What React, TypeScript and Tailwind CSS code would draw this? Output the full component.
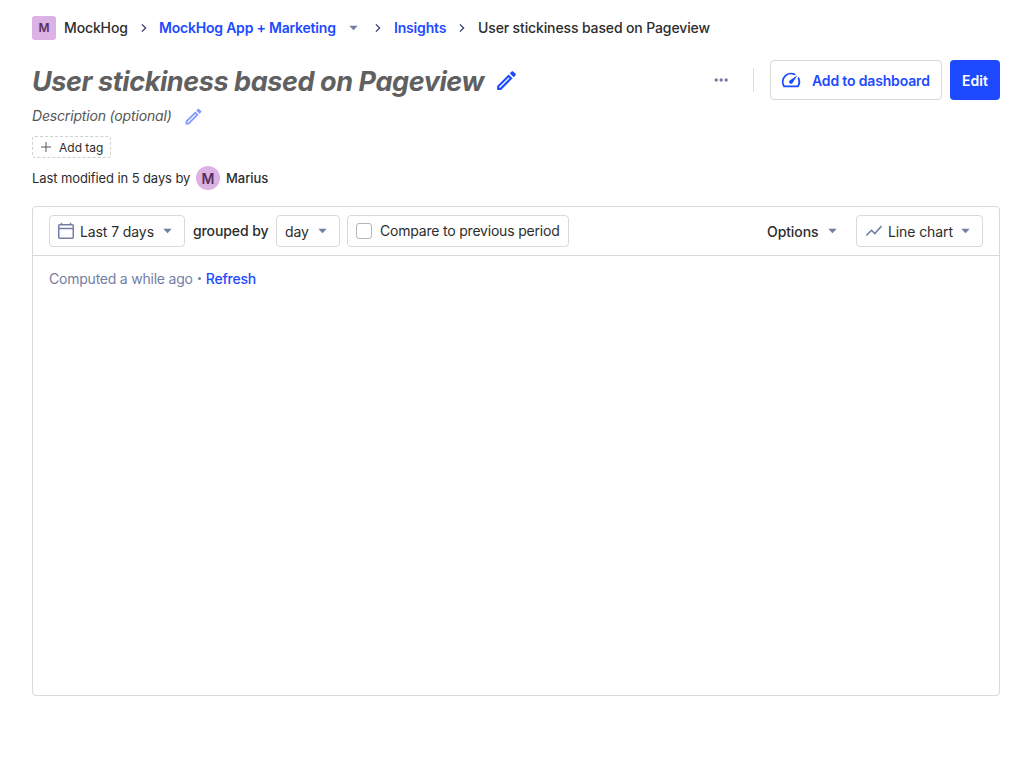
import React from 'react'

function Caret({ className = '' }: { className?: string }) {
    return (
        <svg className={`h-2 w-[9px] shrink-0 fill-[#747ea2] ${className}`} viewBox="0 0 9 8">
            <path d="M.3 1.8h8.4L4.5 6.2z" />
        </svg>
    )
}

function Chevron({ className = '' }: { className?: string }) {
    return (
        <svg className={`h-2 w-[6px] shrink-0 ${className}`} viewBox="0 0 6 8" fill="none" stroke="#35416b" strokeWidth="1.3">
            <path d="M.9.4 4.6 4 .9 7.6" />
        </svg>
    )
}

function Pencil({ className = '' }: { className?: string }) {
    return (
        <svg className={`shrink-0 ${className}`} viewBox="0 0 24 24" fill="currentColor">
            <path d="M14.06 9 15 9.94 5.92 19H5v-.92L14.06 9m3.6-6c-.25 0-.51.1-.7.29l-1.83 1.83 3.75 3.75 1.83-1.83c.39-.39.39-1.04 0-1.41l-2.34-2.34c-.2-.2-.45-.29-.71-.29m-3.6 3.19L3 17.25V21h3.75L17.81 9.94l-3.75-3.75z" />
        </svg>
    )
}

function Breadcrumbs() {
    return (
        <nav className="flex h-6 items-center text-[14px] leading-5 font-medium tracking-[-0.13px] whitespace-nowrap">
            <span className="mr-2 flex h-6 w-6 items-center justify-center rounded-[3px] bg-[#dcb1e3] text-[12px] font-semibold text-[#572e5e]">M</span>
            <span className="w-[64px]">MockHog</span>
            <Chevron className="mr-[12px] ml-[13px]" />
            <a className="w-[177px] font-semibold tracking-[-0.21px] text-[#1d4aff]">MockHog App + Marketing</a>
            <Caret className="ml-[13px]" />
            <Chevron className="mr-[13px] ml-[17px]" />
            <a className="w-[53px] font-semibold tracking-[-0.18px] text-[#1d4aff]">Insights</a>
            <Chevron className="mr-[13px] ml-[12px]" />
            <span>User stickiness based on Pageview</span>
        </nav>
    )
}

function Header() {
    return (
        <header className="mt-5 flex h-10 items-center">
            <h1 className="w-[451px] pt-[3px] text-[27px] leading-10 font-bold tracking-[-0.42px] whitespace-nowrap text-[#606060] italic">User stickiness based on Pageview</h1>
            <Pencil className="ml-[11px] h-[25px] w-[25px] text-[#1d4aff]" />
            <div className="ml-auto flex items-center">
                <svg className="h-4 w-4 fill-[#747ea2]" viewBox="0 0 16 16">
                    <circle cx="3.2" cy="8" r="1.7" />
                    <circle cx="8.2" cy="8" r="1.7" />
                    <circle cx="13.2" cy="8" r="1.7" />
                </svg>
                <div className="mr-4 ml-6 h-6 w-px bg-[#dedede]" />
                <button className="flex h-10 w-[172px] items-center rounded border border-[#d9d9d9] pl-[9px] text-[14px] font-semibold tracking-[-0.16px] whitespace-nowrap text-[#1d4aff]">
                    <svg className="mr-[10px] h-[22px] w-[22px] shrink-0" viewBox="0 0 24 24" fill="currentColor">
                        <path d="m20.38 8.57-1.23 1.85a8 8 0 0 1-.22 7.58H5.07A8 8 0 0 1 15.58 6.85l1.85-1.23A10 10 0 0 0 3.35 19a2 2 0 0 0 1.72 1h13.85a2 2 0 0 0 1.74-1 10 10 0 0 0-.27-10.44zm-9.79 6.84a2 2 0 0 0 2.83 0l5.66-8.49-8.49 5.66a2 2 0 0 0 0 2.83z" />
                    </svg>
                    Add to dashboard
                </button>
                <button className="ml-2 h-10 w-[50px] rounded bg-[#1d4aff] text-[14px] font-semibold text-white">Edit</button>
            </div>
        </header>
    )
}

function Toolbar() {
    return (
        <div className="flex h-[49px] items-center border-b border-[#d9d9d9] px-4 text-[14px] tracking-[-0.1px] whitespace-nowrap">
            <button className="flex h-8 w-[136px] items-center rounded border border-[#d9d9d9] pl-2">
                <svg className="mr-[6px] h-[18px] w-4 shrink-0" viewBox="0 0 16 18" fill="none" stroke="#747ea2" strokeWidth="1.5">
                    <rect x=".75" y="2.75" width="14.5" height="13.5" rx="1" />
                    <path d="M1 6.5h14M3.5.8v2M12.5.8v2" />
                </svg>
                <span className="w-[75px] text-left">Last 7 days</span>
                <Caret className="ml-[8px]" />
            </button>
            <span className="ml-2 w-[75px] pb-[2px] font-medium">grouped by</span>
            <button className="ml-2 flex h-8 w-[64px] items-center rounded border border-[#d9d9d9] pl-2">
                <span className="w-[24px] text-left">day</span>
                <Caret className="ml-[9px]" />
            </button>
            <label className="ml-[7px] flex h-8 w-[222px] items-center rounded border border-[#d9d9d9] pl-2 tracking-[-0.2px]">
                <span className="mr-2 h-4 w-4 rounded-[3px] border-[1.5px] border-[#b5b5b5]" />
                <span className="pb-[2px]">Compare to previous period</span>
            </label>
            <button className="ml-auto flex items-center font-medium">
                <span className="w-[52px] text-left">Options</span>
                <Caret className="mr-[19px] ml-[9px]" />
            </button>
            <button className="flex h-8 w-[127px] items-center rounded border border-[#d9d9d9] pl-2">
                <svg className="mr-[6px] ml-px h-4 w-4 shrink-0" viewBox="0 0 16 16" fill="none" stroke="#747ea2" strokeWidth="1.6">
                    <path d="m.5 12.5 5-5.2 3.3 3.3L15.5 3" />
                </svg>
                <span className="w-[65px] text-left">Line chart</span>
                <Caret className="ml-[8px]" />
            </button>
        </div>
    )
}

export default function App() {
    return (
        <main className="min-h-[776px] bg-white px-8 pt-4 font-['Inter',sans-serif] text-[#2d2d2d]">
            <Breadcrumbs />
            <Header />
            <div className="mt-[5px] flex h-[22px] items-center text-[14px] tracking-[-0.17px] text-[#555] italic">
                <span className="w-[140px] pb-[2px] whitespace-nowrap">Description (optional)</span>
                <Pencil className="ml-[11px] h-[21px] w-[21px] text-[#7f99ff]" />
            </div>
            <div className="mt-[9px] flex h-[22px] w-[79px] items-center rounded-[3px] border border-dashed border-[#d0d0d0] pl-2 text-[12px] whitespace-nowrap">
                <svg className="mr-2 h-[10px] w-[10px]" viewBox="0 0 10 10" fill="none" stroke="#555">
                    <path d="M0 5h10M5 0v10" />
                </svg>
                <span className="pt-[2px]">Add tag</span>
            </div>
            <div className="mt-2 flex h-6 items-center text-[13px] whitespace-nowrap">
                <span className="w-[158px] pt-[2px] tracking-[-0.1px]">Last modified in 5 days by</span>
                <span className="mx-[6px] flex h-6 w-6 items-center justify-center rounded-full bg-[#dcb1e3] pt-px text-[14px] font-semibold text-[#572e5e]">M</span>
                <span className="pt-[2px] font-medium tracking-[-0.05px]">Marius</span>
            </div>
            <section className="mt-4 h-[490px] rounded border border-[#d9d9d9]">
                <Toolbar />
                <div className="flex h-[45px] items-center px-4 text-[14px] tracking-[-0.22px] text-[#747ea2]">
                    Computed a while ago
                    <span className="mx-[5px] h-[3px] w-[3px] rounded-full bg-[#747ea2]" />
                    <a className="font-medium text-[#1d4aff]">Refresh</a>
                </div>
            </section>
        </main>
    )
}
